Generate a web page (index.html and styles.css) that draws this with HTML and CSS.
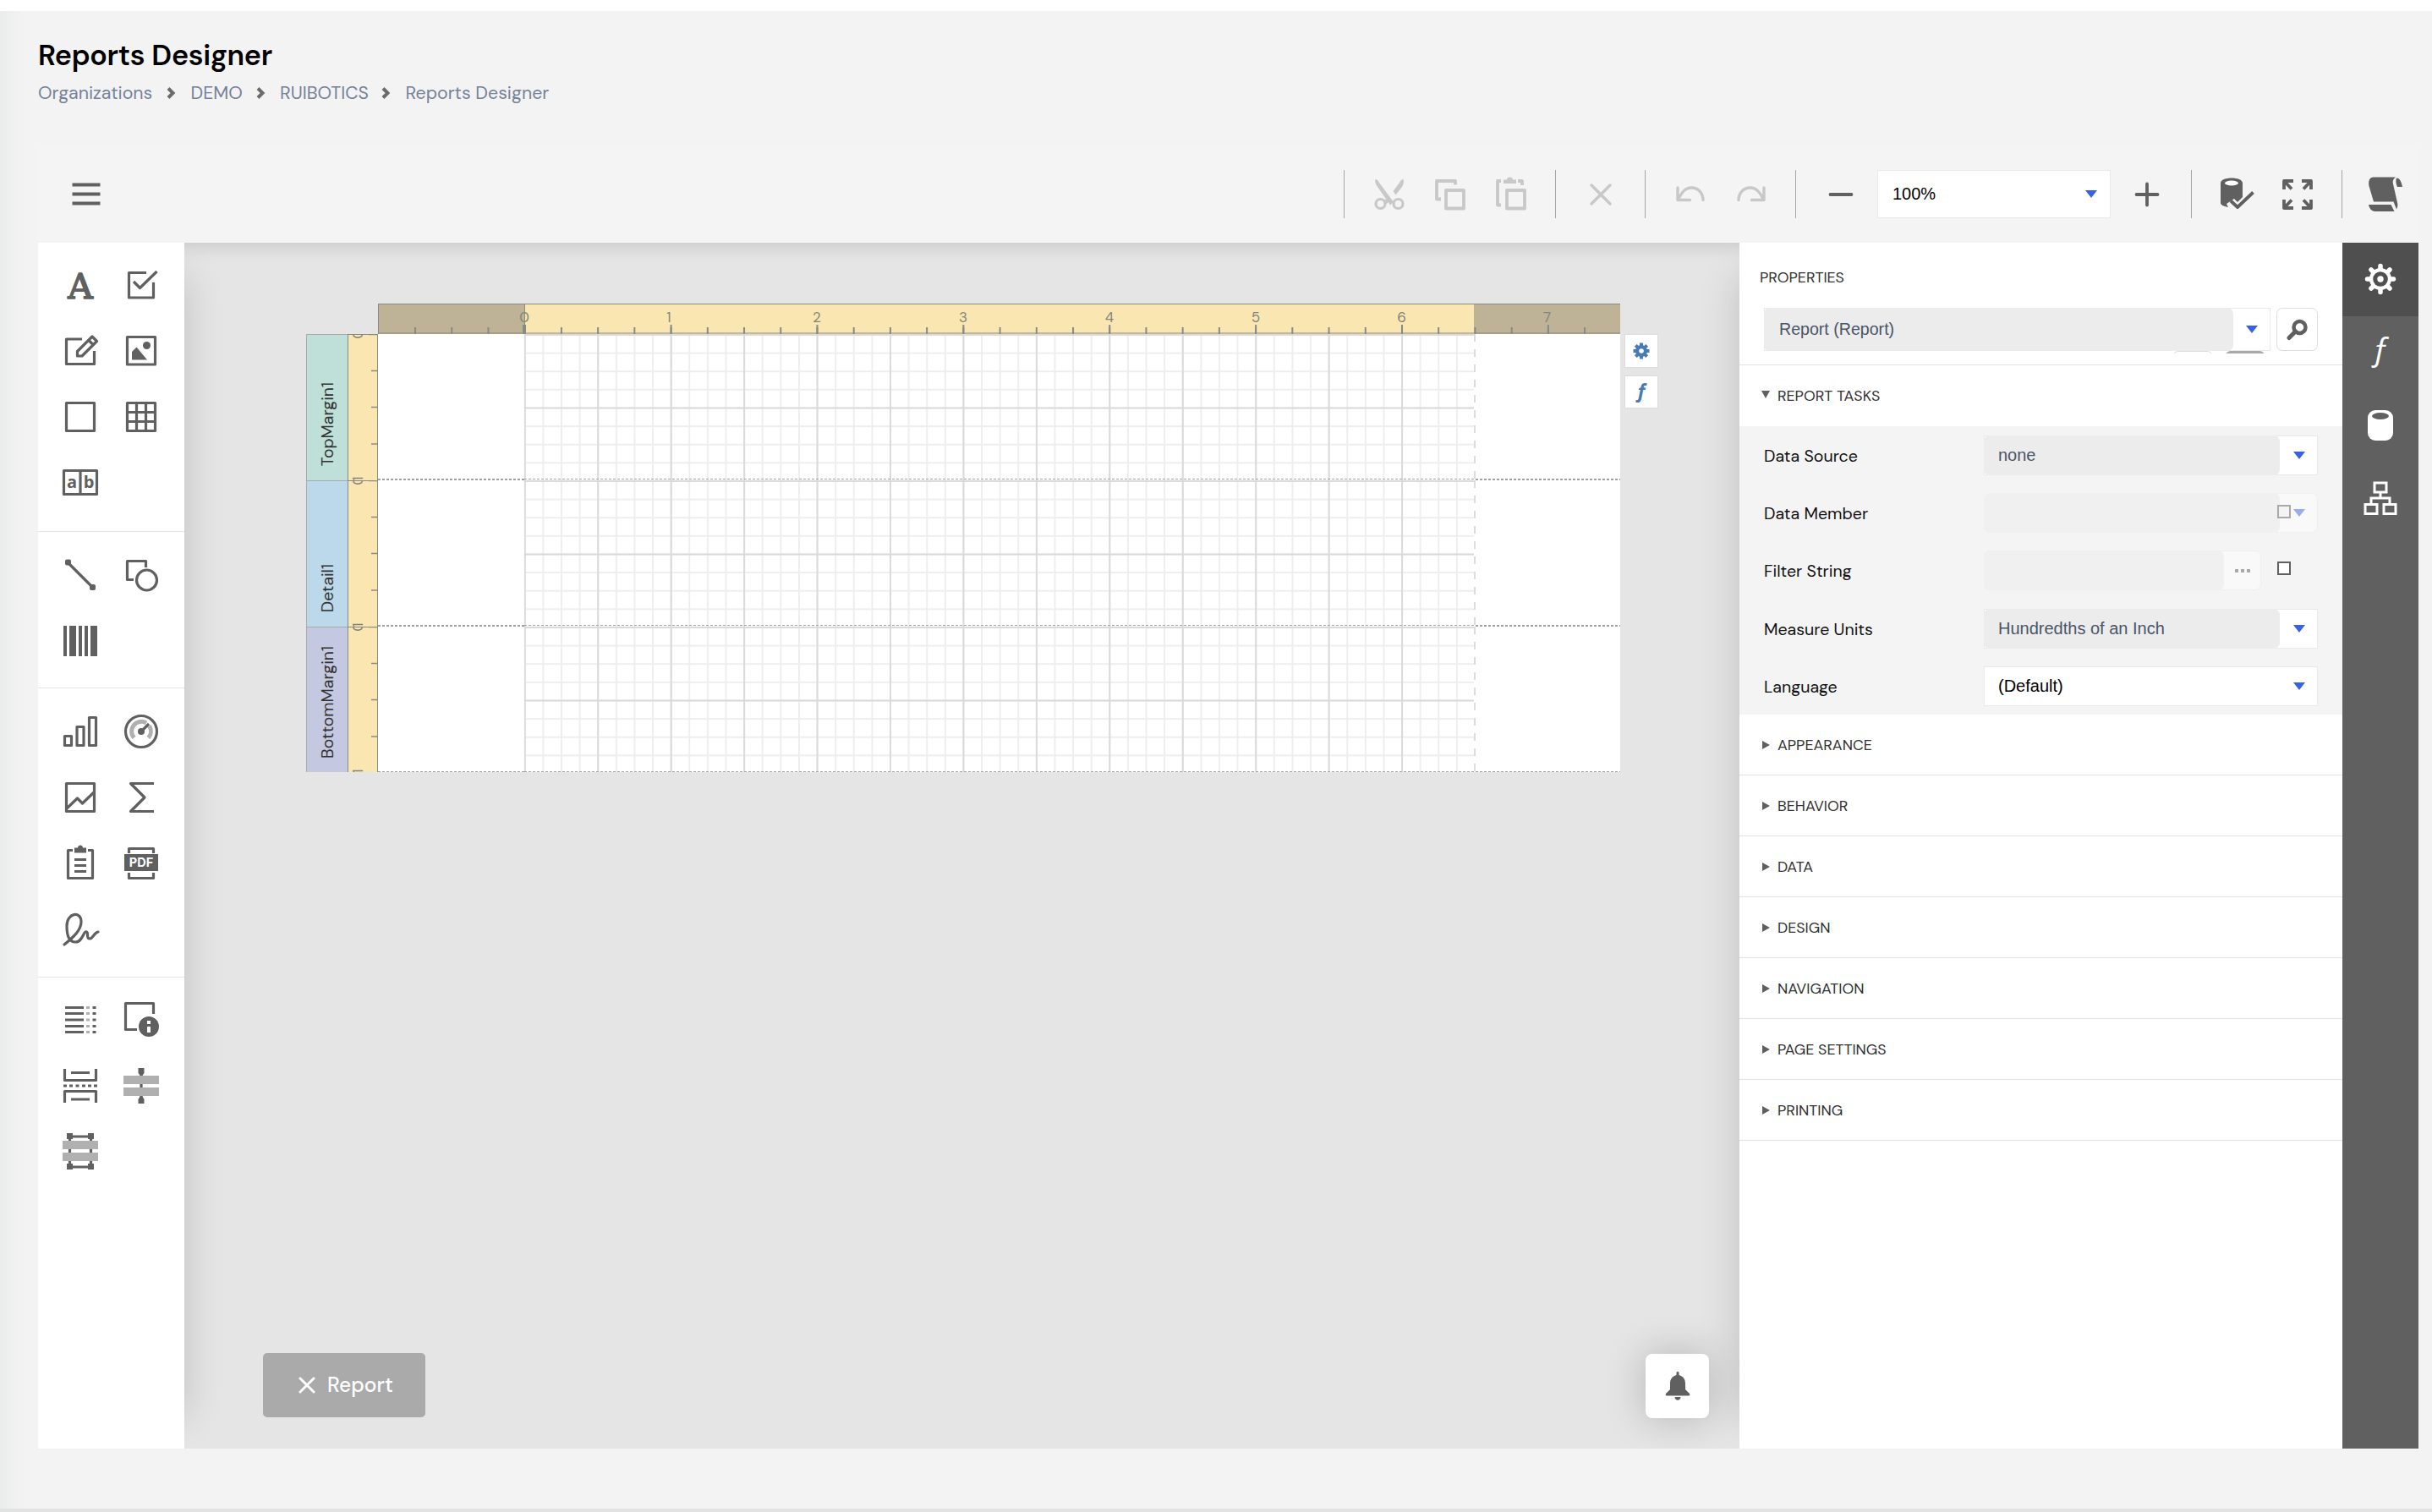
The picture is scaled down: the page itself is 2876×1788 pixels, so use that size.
FILE: index.html
```html
<!DOCTYPE html>
<html lang="en">
<head>
<meta charset="utf-8">
<title>Reports Designer</title>
<link rel="stylesheet" href="styles.css">
</head>
<body>
<div class="page">
  <header class="heading">
    <h1>Reports Designer</h1>
    <nav class="crumbs">
      <span class="crumb c1">Organizations</span>
      <svg class="chev" width="12" height="16" viewBox="0 0 12 16"><path d="M3 2.500l5.500 5.500L3 13.500"/></svg>
      <span class="crumb c2">DEMO</span>
      <svg class="chev" width="12" height="16" viewBox="0 0 12 16"><path d="M3 2.500l5.500 5.500L3 13.500"/></svg>
      <span class="crumb c3">RUIBOTICS</span>
      <svg class="chev" width="12" height="16" viewBox="0 0 12 16"><path d="M3 2.500l5.500 5.500L3 13.500"/></svg>
      <span class="crumb c4">Reports Designer</span>
    </nav>
  </header>

  <main class="designer">
    <div class="toolbar">
      <svg class="icon menu" viewBox="0 0 48 48"><path class="s4" d="M7.500 12.500h33M7.500 23.500h33M7.500 34.500h33"/></svg>
      <i class="sep"></i>
      <div class="tools off">
        <svg class="icon" viewBox="0 0 48 48"><path d="M7.500 6c2 0 3.500 2 4.500 4l17 23-4 3.500L9 13.500C7.500 11 6.500 8 7.500 6z" class="f"/><path d="M40.500 6c-2 0-3.500 2-4.500 4l-7.500 10 3 4.500L39 15c1.500-2.500 2.500-6 1.500-9zM22 27l-5 6 4 2 4-5z" class="f"/><circle cx="13.500" cy="35" r="5.500"/><circle cx="34.500" cy="35" r="5.500"/></svg>
        <svg class="icon" viewBox="0 0 48 48"><path class="s4" d="M13 29.500H8V8h22v4.500M19 19h21v21.500H19z"/></svg>
        <svg class="icon" viewBox="0 0 48 48"><path class="s4" d="M12 36.500H8V8h4M32 8h5v5M19 19h21v21.500H19z"/><path class="f" d="M15 11V6.500h4c0-4 7-4 7 0h4V11z"/></svg>
      </div>
      <i class="sep"></i>
      <div class="tools off">
        <svg class="icon" viewBox="0 0 48 48"><path class="s3 r" d="M13 13l22 22M35 13L13 35"/></svg>
      </div>
      <i class="sep"></i>
      <div class="tools off">
        <svg class="icon" viewBox="0 0 48 48"><path class="s3 r" d="M9 16v14.500h14.500M9.500 30C14 21 18 16 25.500 16S39 22 39 30.500"/></svg>
        <svg class="icon" viewBox="0 0 48 48"><path class="s3 r" d="M39 16v14.500H24.500M38.500 30C34 21 30 16 22.500 16S9 22 9 30.500"/></svg>
      </div>
      <i class="sep"></i>
      <div class="zoomer">
        <svg class="icon" viewBox="0 0 48 48"><path class="s4 r" d="M11.500 24h25"/></svg>
        <div class="combo zoombox"><span>100%</span><b class="tri"></b></div>
        <svg class="icon" viewBox="0 0 48 48"><path class="s4 r" d="M11.500 24h25M24 11.500v25"/></svg>
      </div>
      <i class="sep"></i>
      <div class="tools">
        <svg class="icon" viewBox="0 0 48 48"><path class="f" d="M5 10.500C5 2.500 31 2.500 31 10.500V27l-6 6-4-4-9 6 2 4C8 38 5 36 5 34z"/><ellipse cx="18" cy="10.500" rx="8" ry="3" class="hole"/><path class="s4" d="M17 31.500l8 7.500L43.500 21.500"/></svg>
        <svg class="icon" viewBox="0 0 48 48"><path class="s4" d="M8 18V8h11M9 9l8 8.500M29 8h11v10M39 9l-8 8.500M8 30v10h11M9 39l8-8.500M29 40h11V30M39 39l-8-8.500"/></svg>
      </div>
      <i class="sep end"></i>
      <div class="tools">
        <svg class="icon" viewBox="0 0 48 48"><path class="f" d="M10 3.500h26c-3 2-4 5-3 8l5 22c1 3 0 6-1 8l-3.500-9H10L4.500 14C3.500 8 5 3.500 10 3.500zM4 36h26.500l4 8H12c-4 0-7-3-8-8zM37 4.500c4 0 6 5 7 10.500h-6c-2-4-2-8-1-10.500z"/></svg>
      </div>
    </div>

    <div class="body">
      <aside class="toolbox">
        <div class="group first">
          <svg class="icon" viewBox="0 0 48 48"><text x="24" y="39.500" class="glyphA">A</text></svg>
          <svg class="icon" viewBox="0 0 48 48"><path d="M30 9.500H9.500v29.500H38.500V21"/><path d="M15 20l7.500 7.500L42.500 8"/></svg>
          <svg class="icon" viewBox="0 0 48 48"><path d="M26 10H7.500v29.500H40.500V24"/><path d="M20.500 24.500L38 7l5.500 5.500L26 30h-5.500zM34 11.500l5 5"/></svg>
          <svg class="icon" viewBox="0 0 48 48"><path d="M7.500 7.500h33v32.500h-33z"/><circle class="f" cx="30.500" cy="17.500" r="4.500"/><path class="f" d="M13 34.500V25l5.500-5.500L31 34.500z"/></svg>
          <svg class="icon" viewBox="0 0 48 48"><path d="M7.500 7.500h33v33h-33z"/></svg>
          <svg class="icon" viewBox="0 0 48 48"><path d="M7.500 7.500h33v33h-33zM18.500 8v32M29.500 8v32M8 18.500h32M8 29.500h32"/></svg>
          <svg class="icon" viewBox="0 0 48 48"><path d="M4.500 9.500h39v28h-39zM24 10v27"/><text x="14" y="30" class="ab">a</text><text x="34" y="30" class="ab">b</text></svg>
        </div>
        <div class="group">
          <svg class="icon" viewBox="0 0 48 48"><path d="M9 9l30 30"/><rect class="f" x="6" y="5.500" width="7" height="7" rx="2"/><rect class="f" x="35" y="35" width="7" height="7" rx="2"/></svg>
          <svg class="icon" viewBox="0 0 48 48"><path d="M15 29.500H7.500V7.500h22V15"/><circle cx="30.500" cy="30" r="12"/></svg>
          <svg class="icon" viewBox="0 0 48 48"><path class="f" d="M4 6h4v36H4zM11 6h8v36h-8zM22 6h4v36h-4zM29 6h4v36h-4zM36 6h8v36h-8z"/></svg>
        </div>
        <div class="group">
          <svg class="icon" viewBox="0 0 48 48"><path d="M5.500 29.500h8v11h-8zM20 18.500h8v22h-8zM34.500 7.500h8v33h-8z"/></svg>
          <svg class="icon" viewBox="0 0 48 48"><circle cx="24" cy="24" r="18.500"/><path class="lt w5" d="M15.500 31.500A11.500 11.500 0 0 1 30 14M33.500 17.500a11.500 11.500 0 0 1-1 14"/><circle class="f" cx="24" cy="24" r="4"/><path d="M24 24l9-9"/></svg>
          <svg class="icon" viewBox="0 0 48 48"><path d="M7.500 7.500h33v33h-33zM8 37l12.500-12 6 6L41 17"/></svg>
          <svg class="icon" viewBox="0 0 48 48"><path d="M39 7.500H11.500L28 24 11.500 40.500H39"/></svg>
          <svg class="icon" viewBox="0 0 48 48"><path d="M15 8.500H9.500v33h29v-33H33M17 19.500h14M17 26.500h14M17 33.500h14"/><path class="f" d="M17 11.500V5.500h4c0-4 6-4 6 0h4v6z"/></svg>
          <svg class="icon" viewBox="0 0 48 48"><path d="M9.500 12V6.500h29V12M9.500 35v6.500h29V35"/><path class="f" d="M4 13h40v20H4z"/><text x="24" y="28" class="pdf">PDF</text></svg>
          <svg class="icon" viewBox="0 0 48 48"><path class="r" d="M5 42C16 33 25 25 25 15 25 2 8 4 8 20c0 11 3 19 10 19 8 0 9-10 12-12 5-1 0 8 5 8 4 0 5-7 10-8"/></svg>
        </div>
        <div class="group last">
          <svg class="icon" viewBox="0 0 48 48"><path d="M6 9.500h22M6 16.500h22M6 24h22M6 31.500h22M6 38.500h22M38.500 9.500h4M38.500 16.500h4M38.500 24h4M38.500 31.500h4M38.500 38.500h4"/><path class="lt" d="M31 9.500h4M31 16.500h4M31 24h4M31 31.500h4M31 38.500h4"/></svg>
          <svg class="icon" viewBox="0 0 48 48"><path d="M19 35.500H5.500V4.500h33V17"/><circle class="f" cx="33" cy="32" r="12"/><path class="info" d="M33 25v4M33 32v7"/></svg>
          <svg class="icon" viewBox="0 0 48 48"><path d="M5.500 4v13.500h37V4M13 8.500h22M5.500 44V30.500h37V44M13 40h22M4 24h4M11 24h4M18.500 24h4M26 24h4M33 24h4M40 24h4"/></svg>
          <svg class="icon" viewBox="0 0 48 48"><path d="M24 6v37"/><path class="f" d="M20.500 3h7v6l-2.500 3h-2l-2.500-3zM20.500 45h7v-5l-2.500-4h-2l-2.500 4z"/><path class="ltf" d="M3 12h42v10H3zM3 26h42v10H3z"/></svg>
          <svg class="icon" viewBox="0 0 48 48"><path d="M11.500 6h25v36h-25z"/><path class="f" d="M8 2h7v7H8zM33 2h7v7h-7zM8 38h7v7H8zM33 38h7v7h-7z"/><path class="ltf" d="M3 11h42v10H3zM3 25h42v10H3z"/></svg>
        </div>
      </aside>

      <section class="canvas">
        <div class="sheet">
          <svg class="ruler" width="1469" height="36" viewBox="0 0 1469 36">
            <defs>
              <pattern id="rq" x="172.700" y="0" width="43.220" height="36" patternUnits="userSpaceOnUse"><rect y="28" width="2" height="8" fill="#8a8a85"/></pattern>
              <pattern id="ri" x="172.700" y="0" width="172.880" height="36" patternUnits="userSpaceOnUse"><rect y="25" width="2" height="11" fill="#8a8a85"/></pattern>
            </defs>
            <rect width="1469" height="36" fill="#beb297"/>
            <rect x="173" width="1123" height="36" fill="#fae6b0"/>
            <rect x="20" width="1449" height="36" fill="url(#rq)"/>
            <rect x="170" width="1299" height="36" fill="url(#ri)"/>
            <path d="M0 .5h1469M.5 0v36M173.500 0v36" stroke="#8a8a85"/>
            <path d="M0 35h1469" stroke="#8a8a85"/>
            <rect x="171" y="25" width="4" height="11" fill="#8a8a85"/>
            <g class="nums"><text x="173" y="22">0</text><text x="344" y="22">1</text><text x="519" y="22">2</text><text x="692" y="22">3</text><text x="865" y="22">4</text><text x="1038" y="22">5</text><text x="1210.500" y="22">6</text><text x="1382.500" y="22">7</text></g>
          </svg>
          <div class="bands">
            <div class="band top"><div class="label"><span>TopMargin1</span></div><svg class="vruler" width="36" height="173"><use href="#vr"/></svg><svg class="paper" width="1469" height="173"><use href="#pp"/></svg></div>
            <div class="band detail"><div class="label"><span>Detail1</span></div><svg class="vruler" width="36" height="173"><use href="#vr"/></svg><svg class="paper" width="1469" height="173"><use href="#pp"/></svg></div>
            <div class="band bottom"><div class="label"><span>BottomMargin1</span></div><svg class="vruler" width="36" height="173"><use href="#vr"/></svg><svg class="paper" width="1469" height="173"><use href="#pp"/></svg></div>
          </div>
          <svg class="defs" width="0" height="0">
            <defs>
              <pattern id="minor" x="172.800" y="0" width="21.610" height="21.625" patternUnits="userSpaceOnUse"><path d="M0 1h22M1 0v22" stroke="#eee" stroke-width="2"/></pattern>
              <pattern id="major" x="172.800" y="0" width="86.440" height="86.500" patternUnits="userSpaceOnUse"><path d="M0 1h87M1 0v87" stroke="#dadada" stroke-width="2"/></pattern>
              <g id="vr">
                <rect width="36" height="173" fill="#fae6b0"/>
                <path d="M28 43.500h8M28 86.500h8M28 130h8M25 .5h11" stroke="#8a8a85" stroke-width="1.500"/>
                <path d="M.5 0v173M35.500 0v173M0 .5h36" stroke="#8a8a85"/>
                <g class="nums"><text transform="translate(17.500 0) rotate(-90)">0</text><text transform="translate(17.500 171) rotate(-90)">1</text></g>
              </g>
              <g id="pp">
                <rect width="1469" height="173" fill="#fff"/>
                <rect x="172.800" width="1124" height="173" fill="url(#minor)"/>
                <rect x="172.800" width="1124" height="173" fill="url(#major)"/>
                <path d="M1297 0v173" stroke="#fff" stroke-width="2"/>
                <path d="M1297 0v173" stroke="#dcdcdc" stroke-width="2" stroke-dasharray="9 9"/>
                <path d="M0 172h173M1298 172h171" stroke="#a0a0a0" stroke-width="2" stroke-dasharray="3 2"/>
                <path d="M173 171.500h1125" stroke="#a5a5a5" stroke-dasharray="3 2"/>
              </g>
            </defs>
          </svg>
          <div class="smart">
            <button><svg width="22" height="22" viewBox="-11 -11 22 22"><g stroke="#4a7ab5" stroke-width="4"><path d="M0-9.500V9.500M-9.500 0H9.500M-6.700-6.700L6.700 6.700M6.700-6.700L-6.700 6.700"/></g><circle r="7" fill="#4a7ab5"/><circle r="2.800" fill="#fff"/></svg></button>
            <button class="fx"><svg width="30" height="36"><text x="15" y="24">ƒ</text></svg></button>
          </div>
        </div>
        <button class="report"><svg width="20" height="20" viewBox="0 0 20 20"><path d="M2 2l16 16M18 2L2 18" stroke="#fff" stroke-width="3" stroke-linecap="round"/></svg><span>Report</span></button>
        <button class="bell"><svg width="30" height="34" viewBox="0 0 30 34"><path fill="#606060" d="M13.500 1.500c0-2 3-2 3 0v2.500c5 1.500 7.500 5 7.500 10v7l4.500 4.500c1 1 1 2.500 0 3h-27c-1-.5-1-2 0-3L6 21v-7c0-5 2.500-8.500 7.500-10zM11.500 30h7c0 5-7 5-7 0z"/></svg></button>
      </section>

      <section class="props">
        <div class="phead">
          <h2>PROPERTIES</h2>
          <div class="pick">
            <div class="combo fill big"><span class="field">Report (Report)</span><b class="tri"></b></div>
            <button class="find"><svg width="26" height="26" viewBox="0 0 26 26"><circle cx="15.500" cy="10" r="7" fill="none" stroke="#606060" stroke-width="4.500"/><path d="M10.500 15L3 22.500" stroke="#606060" stroke-width="5" stroke-linecap="round"/></svg></button>
          </div>
          <div class="peek"><i></i><i class="dark"></i></div>
        </div>
        <h3 class="open"><b class="arr down"></b>REPORT TASKS</h3>
        <div class="tasks">
          <div class="row"><label>Data Source</label><div class="combo fill"><span class="field">none</span><b class="tri"></b></div></div>
          <div class="row"><label>Data Member</label><div class="combo fill faded"><span class="field"></span><b class="tri"></b><i class="box"></i></div></div>
          <div class="row"><label>Filter String</label><div class="combo fill faded short"><span class="field"></span><span class="dots"><i></i><i></i><i></i></span></div><i class="box"></i></div>
          <div class="row"><label>Measure Units</label><div class="combo fill"><span class="field">Hundredths of an Inch</span><b class="tri"></b></div></div>
          <div class="row"><label>Language</label><div class="combo"><span class="field">(Default)</span><b class="tri"></b></div></div>
        </div>
        <h3><b class="arr"></b>APPEARANCE</h3>
        <h3><b class="arr"></b>BEHAVIOR</h3>
        <h3><b class="arr"></b>DATA</h3>
        <h3><b class="arr"></b>DESIGN</h3>
        <h3><b class="arr"></b>NAVIGATION</h3>
        <h3><b class="arr"></b>PAGE SETTINGS</h3>
        <h3><b class="arr"></b>PRINTING</h3>
      </section>

      <nav class="tabs">
        <a class="active"><svg width="48" height="48" viewBox="-24 -24 48 48"><path stroke="#fff" stroke-width="5.500" stroke-linecap="round" d="M0-15.500V15.500M-15.500 0H15.500M-11-11L11 11M11-11L-11 11"/><circle r="13" fill="#fff"/><circle r="8.800" fill="#4f4f4f"/><circle r="3.700" fill="#fff"/></svg></a>
        <a><svg width="60" height="64"><text x="30" y="41" class="tabf">ƒ</text></svg></a>
        <a><svg width="48" height="48" viewBox="0 0 48 48"><rect x="9" y="6" width="30" height="36" rx="9" fill="#fff"/><ellipse cx="24" cy="13" rx="10" ry="4" fill="#606060"/></svg></a>
        <a><svg width="48" height="48" viewBox="0 0 48 48"><path fill="none" stroke="#fff" stroke-width="3" d="M17 5h14v11H17zM6 30.500h14v11H6zM28 30.500h14v11H28zM24 16v7M13 30.500V23h22v7.500"/></svg></a>
      </nav>
    </div>
  </main>
</div>
</body>
</html>
```
FILE: styles.css
```css
* { box-sizing: border-box; }
body { margin: 0; background: #f3f3f3; font-family: "DM Sans", Inter, "Liberation Sans", sans-serif; color: #333; }
h1, h2, h3 { margin: 0; font-weight: 400; }
button { padding: 0; background: #fff; border: 1px solid #ddd; display: flex; align-items: center; justify-content: center; font-family: inherit; }
svg { display: block; flex: none; }

.page {
  height: 1788px; padding: 0 16px 0 45px;
  border-top: 13px solid #fff; border-bottom: 4px solid #e2e2e2;
  background: linear-gradient(90deg, #ebedec 0, #f3f3f3 30px);
  overflow: hidden;
}
.heading { height: 159px; padding-top: 32px; }
.heading h1 { font-size: 34px; line-height: 42px; font-weight: 600; letter-spacing: -.280px; color: #000; }
.crumbs { display: flex; align-items: center; height: 28px; margin-top: 9px; font-size: 21.350px; color: #75829a; white-space: nowrap; }
.crumb { flex: none; }
.c1 { width: 151px; } .c2 { width: 76px; } .c3 { width: 119px; }
.chev { margin-right: 17.500px; fill: none; stroke: #6b6b6b; stroke-width: 4; }

.designer { width: 2815px; background: #f4f4f4; }
.toolbar { display: flex; align-items: center; height: 115px; padding: 0 15px 0 33px; }
.icon { width: 48px; height: 48px; fill: none; stroke: #606060; stroke-width: 3.200; stroke-linejoin: round; }
.icon .s4 { stroke-width: 3.800; }
.icon .s3 { stroke-width: 3.400; }
.icon .w5 { stroke-width: 5; }
.icon .r { stroke-linecap: round; }
.icon .f { fill: #606060; stroke: none; }
.icon .lt { stroke: #b0b0b0; }
.icon .ltf { fill: #b0b0b0; stroke: none; }
.icon .hole { fill: #fff; stroke: none; }
.icon .info { stroke: #fff; stroke-width: 4; }
.icon.menu { margin-right: auto; }
.sep { flex: none; width: 1px; height: 57px; margin: 0 29px 0 28px; background: #a6a6a6; }
.sep.end { margin-right: 27px; }
.tools { display: flex; gap: 24px; }
.off .icon { stroke: #c8c8c8; }
.off .icon .f { fill: #c8c8c8; }
.zoomer { display: flex; align-items: center; gap: 19px; }
.combo { display: flex; align-items: center; height: 47px; border: 1px solid #e9e9e9; background: #fff; font: 20px "Liberation Sans", Arial, sans-serif; color: #000; }
.zoombox { width: 276px; height: 57px; padding: 0 15px 0 17px; }
.tri { margin-left: auto; border: 7.500px solid transparent; border-top: 9px solid #3a61e4; border-bottom: 0; }

.body { display: grid; grid-template-columns: 173px 1839px 713px 90px; height: 1426px; }
.toolbox { background: #fff; }
.group { display: grid; grid-template-columns: 72px 72px; grid-auto-rows: 78px; padding: 12px 0 16.500px 14px; place-items: center; border-bottom: 1px solid #e4e4e4; }
.group.first { padding-top: 11px; padding-bottom: 17.500px; }
.group.last { border: 0; padding-top: 11px; }
.icon text { stroke: none; fill: #606060; text-anchor: middle; font-weight: 700; }
.icon .glyphA { font: 400 41px/1 "DejaVu Serif", serif; stroke: #606060; stroke-width: 1.600; }
.icon .ab { font: 700 20px "Open Sans", sans-serif; }
.icon .pdf { font: 700 14.500px Inter, sans-serif; fill: #fff; }

.canvas { position: relative; overflow: hidden; background: #e5e5e5; padding: 72px 0 0 144px; box-shadow: inset 0 22px 22px -18px rgba(0,0,0,.13); }
.canvas::before, .canvas::after { content: ""; position: absolute; top: 40px; bottom: 40px; width: 100px; left: -100px; box-shadow: 0 0 48px rgba(0,0,0,.17); }
.canvas::after { left: auto; right: -100px; }
.sheet { display: grid; grid-template-columns: 1554px 40px; column-gap: 5px; }
.ruler { grid-column: 1; margin-left: 85px; }
.nums { font-size: 17px; fill: #85857f; text-anchor: middle; }
.bands { grid-column: 1; height: 518px; overflow: hidden; }
.band { display: grid; grid-template-columns: 49px 36px 1469px; height: 173px; }
.label { border-left: 1px solid #a9a9a9; border-top: 1px solid #a9a9a9; display: flex; align-items: center; writing-mode: vertical-rl; font-size: 19.400px; color: #333; white-space: nowrap; }
.label span { transform: rotate(180deg); margin-top: auto; margin-bottom: 17px; }
.top .label { background: #bee0d8; }
.detail .label { background: #bbd9ea; }
.bottom .label { background: #c5c8e1; }
.defs { position: absolute; }
.smart { grid-column: 2; grid-row: 2; display: flex; flex-direction: column; gap: 9px; }
.smart button { width: 40px; height: 40px; }
.smart .fx { height: 39px; }
.fx text { font: italic 700 23px "Open Sans", sans-serif; fill: #4a7ab5; text-anchor: middle; }
.report { position: absolute; left: 93px; top: 1313px; width: 192px; height: 76px; border: 0; border-radius: 5px; background: #aaa; color: #fff; font-size: 24.500px; font-weight: 500; gap: 14px; justify-content: flex-start; padding-left: 42px; }
.bell { position: absolute; left: 1728px; top: 1314px; width: 75px; height: 76px; border: 0; border-radius: 8px; box-shadow: 0 0 48px rgba(0,0,0,.22); z-index: 1; }

.props { background: #fff; }
.phead { height: 145px; padding: 28px 29px 0; border-bottom: 1px solid #e2e2e2; }
.phead h2 { font-size: 17.750px; line-height: 26px; margin-left: -5px; }
.pick { display: flex; justify-content: space-between; margin-top: 23px; }
.combo .field { display: flex; align-items: center; align-self: stretch; padding-left: 16px; }
.fill .field { width: 350px; margin: -1px 0 -1px -1px; padding-left: 17px; border-radius: 7px; background: #ececec; color: #4a5568; }
.pick .combo { width: 599px; height: 51px; }
.pick .field { width: 555px; font-size: 19.600px; padding-left: 18px; }
.combo .tri { margin-right: 14px; }
.zoombox .tri { margin-right: 0; }
.find { width: 49px; height: 51px; border-radius: 7px; }
.peek { display: flex; gap: 14px; height: 3px; overflow: hidden; margin-left: 483px; }
.peek i { flex: none; width: 48px; height: 20px; border: 1px solid #ddd; border-radius: 7px; }
.peek .dark { background: #aaa; border-color: #aaa; }
.props h3 { display: flex; align-items: center; height: 72px; padding: 1px 0 0 27px; border-bottom: 1px solid #e2e2e2; font-size: 17.800px; }
.props h3.open { border: 0; padding: 0 0 0 27px; }
.props h3 .arr { margin-right: 9px; border: 5px solid transparent; border-left: 9px solid #606060; border-right: 0; }
.props h3 .down { margin: -4px 9px 0 -1px; border: 5px solid transparent; border-top: 9px solid #606060; border-bottom: 0; }
.tasks { background: #f4f4f4; }
.row { display: flex; align-items: center; height: 68.300px; padding-left: 29px; font-size: 19.600px; color: #111; }
.row label { flex: none; width: 260px; padding-top: 2px; }
.row .combo { position: relative; width: 395px; }
.row .faded { background: #f9f9f9; border-color: #efefef; border-radius: 7px; }
.faded .field { background: #f0f0f0; }
.faded .tri { opacity: .5; }
.row .short { width: 328px; }
.short .field { width: 284px; }
.dots { display: flex; gap: 3px; margin: 0 auto; }
.dots i { width: 4px; height: 4px; background: #a8a8a8; }
.box { width: 16px; height: 16px; margin-left: 19px; margin-top: -5px; border: 2px solid #606060; background: #fff; }
.faded .box { position: absolute; left: 346px; margin: -3px 0 0; border-color: #aaa; background: #f4f4f4; }

.tabs { background: #606060; }
.tabs a { display: grid; place-items: center; height: 86.500px; }
.tabs .active { background: #4f4f4f; }
.tabf { font: italic 500 38px/1 "Open Sans", sans-serif; fill: #fff; text-anchor: middle; }
```
